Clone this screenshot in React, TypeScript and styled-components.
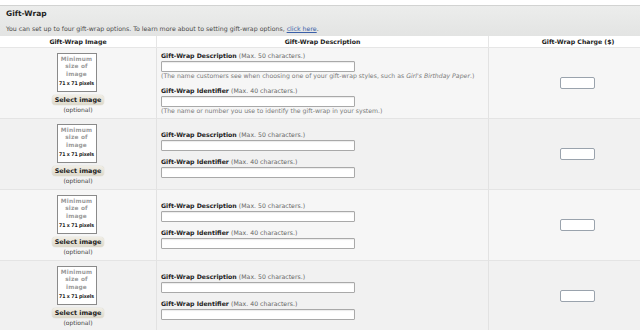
import React from 'react';
import styled, { createGlobalStyle } from 'styled-components';

const GlobalStyle = createGlobalStyle`
  html, body {
    margin: 0;
    padding: 0;
    background: #fff;
    overflow: hidden;
  }
  body {
    font-family: "DejaVu Sans", Verdana, sans-serif;
  }
`;

const Page = styled.div`
  padding-top: 5px;
  width: 668px;
`;

const Panel = styled.section`
  border-top: 1px solid #d2d3d2;
  background: linear-gradient(#ecedec, #e3e4e3);
`;

const Title = styled.h2`
  margin: 0;
  height: 15px;
  line-height: 15px;
  padding-left: 6px;
  font-size: 7.5px;
  font-weight: bold;
  color: #1f1f1f;
`;

const Intro = styled.p`
  margin: 0;
  height: 15px;
  line-height: 15px;
  padding-left: 6px;
  font-size: 6.25px;
  color: #4a4a4a;

  a {
    color: #3a5fa8;
    text-decoration: underline;
  }
`;

const Grid = styled.div`
  display: grid;
  grid-template-columns: 157px 332px 179px;
`;

const HeadCell = styled.div`
  height: 11px;
  line-height: 11px;
  background: #fff;
  border-bottom: 1px solid #e6e6e6;
  border-right: 1px solid #e6e6e6;
  text-align: center;
  font-size: 6.2px;
  font-weight: bold;
  color: #222;
`;

const Cell = styled.div<{ $shade: boolean; $align?: 'start' | 'center' }>`
  height: 70px;
  border-bottom: 1px solid #e4e4e4;
  border-right: 1px solid #e2e2e2;
  background: ${(p) => (p.$shade ? '#f1f1f1' : '#f6f6f6')};
  display: flex;
  flex-direction: column;
  justify-content: center;
  align-items: ${(p) => (p.$align === 'start' ? 'flex-start' : 'center')};
  padding-left: ${(p) => (p.$align === 'start' ? '4px' : '0')};
`;

const Thumb = styled.div`
  width: 38px;
  height: 37px;
  border: 1.5px solid #8a8a8a;
  background: #fff;
  display: flex;
  flex-direction: column;
  align-items: center;
  justify-content: center;
  margin-left: -3px;
`;

const ThumbText = styled.span`
  font-size: 5.8px;
  line-height: 7.5px;
  font-weight: bold;
  letter-spacing: 0.2px;
  color: #9a9a9a;
  text-align: center;
`;

const ThumbSize = styled.span`
  font-family: "DejaVu Sans Condensed", "DejaVu Sans", sans-serif;
  font-size: 5.2px;
  line-height: 9px;
  font-weight: bold;
  letter-spacing: -0.1px;
  color: #1a1a1a;
  margin-top: 1px;
  white-space: nowrap;
`;

const SelectButton = styled.button`
  margin-top: 3px;
  height: 10px;
  padding: 0 3px;
  border: none;
  border-radius: 4px;
  background: linear-gradient(#f1eee5, #dcd8ca);
  box-shadow: 0 0 1px #b9b39c;
  font-family: inherit;
  font-size: 6.4px;
  font-weight: bold;
  line-height: 10px;
  color: #1a1a1a;
`;

const Optional = styled.span`
  font-size: 6px;
  line-height: 9px;
  color: #444;
`;

const Field = styled.div`
  & + & {
    margin-top: 7px;
  }
`;

const Label = styled.div`
  font-size: 6.2px;
  line-height: 8px;
  font-weight: bold;
  color: #222;

  span {
    font-weight: normal;
    color: #666;
  }
`;

const TextInput = styled.input<{ $w: number }>`
  display: block;
  box-sizing: border-box;
  width: ${(p) => p.$w}px;
  height: 11px;
  margin: 1px 0 0;
  padding: 0;
  border: 1px solid #a9a9a9;
  border-radius: 1px;
  background: #fff;
  box-shadow: inset 0 1px 1px rgba(0, 0, 0, 0.08);
`;

const Help = styled.div`
  font-size: 6.2px;
  line-height: 8px;
  color: #7a7a7a;

  em {
    font-style: italic;
  }
`;

const ChargeInput = styled.input`
  box-sizing: border-box;
  width: 35px;
  height: 12px;
  padding: 0;
  border: 1px solid #9aa3ad;
  border-radius: 2px;
  background: #fff;
  margin-left: -2px;
`;

const rows = [0, 1, 2, 3];

export default function App() {
  return (
    <Page>
      <GlobalStyle />
      <Panel>
        <Title>Gift-Wrap</Title>
        <Intro>
          You can set up to four gift-wrap options. To learn more about to setting gift-wrap options,{' '}
          <a href="#">click here</a>.
        </Intro>
      </Panel>
      <Grid>
        <HeadCell>Gift-Wrap Image</HeadCell>
        <HeadCell>Gift-Wrap Description</HeadCell>
        <HeadCell>Gift-Wrap Charge ($)</HeadCell>
        {rows.map((i) => (
          <React.Fragment key={i}>
            <Cell $shade={i % 2 === 1}>
              <Thumb>
                <ThumbText>
                  Minimum
                  <br />
                  size of
                  <br />
                  image
                </ThumbText>
                <ThumbSize>71 x 71 pixels</ThumbSize>
              </Thumb>
              <SelectButton>Select image</SelectButton>
              <Optional>(optional)</Optional>
            </Cell>
            <Cell $shade={i % 2 === 1} $align="start">
              <Field>
                <Label>
                  Gift-Wrap Description <span>(Max. 50 characters.)</span>
                </Label>
                <TextInput $w={194} />
                {i === 0 && (
                  <Help>
                    (The name customers see when choosing one of your gift-wrap styles, such as{' '}
                    <em>Girl's Birthday Paper</em>.)
                  </Help>
                )}
              </Field>
              <Field>
                <Label>
                  Gift-Wrap Identifier <span>(Max. 40 characters.)</span>
                </Label>
                <TextInput $w={194} />
                {i === 0 && <Help>(The name or number you use to identify the gift-wrap in your system.)</Help>}
              </Field>
            </Cell>
            <Cell $shade={i % 2 === 1}>
              <ChargeInput />
            </Cell>
          </React.Fragment>
        ))}
      </Grid>
    </Page>
  );
}
